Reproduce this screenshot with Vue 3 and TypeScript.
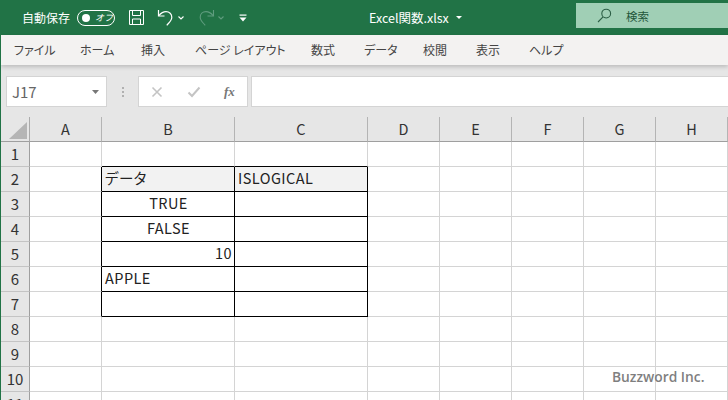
<script setup lang="ts">
interface Cell { text?: string; align?: string; head?: boolean }

const tabs: string[] = ['ファイル', 'ホーム', '挿入', 'ページ レイアウト', '数式', 'データ', '校閲', '表示', 'ヘルプ']
const cols: string[] = ['A', 'B', 'C', 'D', 'E', 'F', 'G', 'H']
const rows: number[] = [1, 2, 3, 4, 5, 6, 7, 8, 9, 10, 11]

const content: Record<string, Cell> = {
  B2: { text: 'データ', head: true },
  C2: { text: 'ISLOGICAL', head: true },
  B3: { text: 'TRUE', align: 'center' },
  B4: { text: 'FALSE', align: 'center' },
  B5: { text: '10', align: 'right' },
  B6: { text: 'APPLE' },
}

function cellClass(c: string, r: number): (string | Record<string, boolean>)[] {
  const inTable = (c === 'B' || c === 'C') && r >= 2 && r <= 7
  const cell = content[c + r]
  return [
    'cell',
    cell?.align ? 'al-' + cell.align : '',
    {
      head: !!cell?.head,
      'black-r': inTable || (c === 'A' && r >= 2 && r <= 7),
      'black-b': inTable || ((c === 'B' || c === 'C') && r === 1),
    },
  ]
}
</script>

<template>
  <div class="app">
    <header class="titlebar">
      <span class="autosave">自動保存</span>
      <span class="toggle"><i class="knob"></i><em>オフ</em></span>
      <svg class="ic save" width="17" height="17" viewBox="0 0 17 17" fill="none" stroke="#fff" stroke-width="1">
        <path d="M1.5 1.5h14v14h-14z" />
        <path d="M4.5 1.5v5h8v-5" />
        <path d="M4.5 15.5v-5.5h8v5.5" />
      </svg>
      <svg class="ic undo" width="17" height="18" viewBox="0 0 17 18" fill="none" stroke="#fff" stroke-width="1.2">
        <path d="M1.5 1v6h6" />
        <path d="M1.8 6.6C4 4 6 2.6 9 2.6c3.4 0 5.8 2.4 5.8 5.6 0 3.4-3 5.6-5 8.2" />
      </svg>
      <svg class="ic chev" width="6" height="4" viewBox="0 0 6 4" fill="none" stroke="#fff" stroke-width="1.1"><path d="M.5.5 3 3 5.5.5" /></svg>
      <svg class="ic redo" width="17" height="18" viewBox="0 0 17 18" fill="none" stroke="#5f9c7e" stroke-width="1.1">
        <path d="M15.5 1v6h-6" />
        <path d="M15.2 6.6C13 4 11 2.6 8 2.6 4.6 2.6 2.2 5 2.2 8.2c0 3.4 3 5.6 5 8.2" />
      </svg>
      <svg class="ic chev2" width="6" height="4" viewBox="0 0 6 4" fill="none" stroke="#5f9c7e" stroke-width="1.1"><path d="M.5.5 3 3 5.5.5" /></svg>
      <svg class="ic qat" width="8" height="8" viewBox="0 0 8 8" fill="#fff">
        <rect x="0.5" y="0.5" width="7" height="1.2" />
        <path d="M.5 3.6h7L4 7.4z" />
      </svg>
      <span class="filename">Excel関数.xlsx</span>
      <svg class="ic caret" width="6" height="3" viewBox="0 0 6 3" fill="#fff"><path d="M0 0h6L3 3z" /></svg>
      <div class="search">
        <svg width="15" height="15" viewBox="0 0 15 15" fill="none" stroke="#2b5e44" stroke-width="1.1">
          <circle cx="9.2" cy="5.6" r="4.4" />
          <path d="M6 8.8 1 14" />
        </svg>
        <span>検索</span>
      </div>
    </header>

    <nav class="tabs">
      <span v-for="t in tabs" :key="t" class="tab">{{ t }}</span>
    </nav>

    <div class="formula">
      <div class="namebox">
        <span>J17</span>
        <svg width="7" height="4" viewBox="0 0 7 4" fill="#777"><path d="M0 0h7L3.5 4z" /></svg>
      </div>
      <div class="dots"><i></i><i></i><i></i></div>
      <div class="fbtns">
        <svg width="12" height="12" viewBox="0 0 12 12" fill="none" stroke="#c4c4c4" stroke-width="1.6"><path d="M1.5 1.5l9 9M10.5 1.5l-9 9" /></svg>
        <svg width="14" height="12" viewBox="0 0 14 12" fill="none" stroke="#c4c4c4" stroke-width="2"><path d="M1.5 6.5 5 10l7.5-8.5" /></svg>
        <span class="fx">fx</span>
      </div>
      <div class="finput"></div>
    </div>

    <div class="sheet">
      <div class="corner">
        <svg width="18" height="17" viewBox="0 0 18 17"><path d="M18 0v17H0z" fill="#b5b5b5" /></svg>
      </div>
      <div v-for="c in cols" :key="c" class="colh">{{ c }}</div>
      <template v-for="r in rows" :key="r">
        <div class="rowh">{{ r }}</div>
        <div v-for="c in cols" :key="c + r" :class="cellClass(c, r)">{{ content[c + r]?.text }}</div>
      </template>
    </div>

    <div class="mark">Buzzword Inc.</div>
  </div>
</template>

<style>
html, body { margin: 0; padding: 0; background: #fff; }
</style>

<style scoped>
.app {
  position: relative;
  width: 728px;
  height: 400px;
  overflow: hidden;
  box-sizing: border-box;
  border-left: 1px solid #217346;
  font-family: "Noto Sans CJK JP", "Noto Sans", sans-serif;
  color: #333;
}
.titlebar {
  margin-left: -1px;
  height: 35px;
  background: #217346;
  display: flex;
  align-items: center;
  color: #fff;
  position: relative;
}
.autosave { margin-left: 22px; font-size: 12px; width: 48px; white-space: nowrap; }
.toggle {
  margin-left: 7px;
  width: 38px;
  height: 16px;
  box-sizing: border-box;
  border: 1px solid #fff;
  border-radius: 8px;
  display: flex;
  align-items: center;
  padding-left: 4px;
}
.knob { width: 8px; height: 8px; border-radius: 50%; background: #fff; }
.toggle em { font-size: 9px; margin-left: 5px; line-height: 1; white-space: nowrap; }
.ic { flex: none; }
.save { margin-left: 13px; }
.undo { margin-left: 12px; }
.chev { margin-left: 4px; }
.redo { margin-left: 14px; }
.chev2 { margin-left: 3px; }
.qat { margin-left: 15px; }
.filename { margin-left: 122px; font-size: 12.5px; width: 81px; white-space: nowrap; }
.caret { margin-left: 6px; }
.search {
  margin-left: auto;
  width: 152px;
  height: 25px;
  margin-bottom: 5px;
  background: #a0cfb5;
  display: flex;
  align-items: center;
  padding-left: 21px;
  box-sizing: border-box;
  color: #24573c;
  font-size: 11.5px;
}
.search span { margin-left: 14px; padding-top: 2px; }
.tabs {
  height: 30px;
  background: #f3f2f1;
  display: grid;
  grid-template-columns: 66px 61px 54px 116px 53px 59px 53px 53px auto;
  align-items: center;
  padding: 0 0 2px 13px;
  box-sizing: border-box;
  font-size: 12px;
  color: #444;
  font-feature-settings: "palt";
  box-shadow: 0 2px 4px rgba(0, 0, 0, 0.18);
  position: relative;
}
.tab { white-space: nowrap; }
.formula {
  height: 52px;
  background: #e6e6e6;
  display: flex;
  align-items: flex-start;
  padding: 11px 0 0 5px;
  box-sizing: border-box;
}
.namebox {
  width: 101px;
  height: 31px;
  box-sizing: border-box;
  background: #fff;
  border: 1px solid #d4d4d4;
  display: flex;
  align-items: center;
  justify-content: space-between;
  padding: 0 7px 0 5px;
  font-size: 15px;
  color: #666;
}
.dots {
  width: 31px;
  height: 31px;
  display: flex;
  flex-direction: column;
  align-items: center;
  justify-content: center;
  gap: 2px;
}
.dots i { width: 2px; height: 2px; background: #b0b0b0; }
.fbtns {
  width: 110px;
  height: 31px;
  box-sizing: border-box;
  background: #fff;
  border: 1px solid #d4d4d4;
  display: flex;
  align-items: center;
  padding-left: 12px;
  gap: 24px;
}
.fx {
  font-family: "Liberation Serif", serif;
  font-style: italic;
  font-weight: 700;
  font-size: 13px;
  color: #777;
  margin-left: -1px;
}
.finput {
  margin-left: 3px;
  flex: 1;
  height: 31px;
  box-sizing: border-box;
  background: #fff;
  border: 1px solid #d4d4d4;
  border-right: 0;
}
.sheet {
  display: grid;
  grid-template-columns: 29px 72px 133px 133px repeat(5, 72px);
  grid-auto-rows: 25px;
  height: 283px;
  overflow: hidden;
}
.corner, .colh, .rowh { background: #e6e6e6; box-sizing: border-box; }
.corner {
  border-right: 1px solid #ababab;
  border-bottom: 1px solid #9f9f9f;
  display: flex;
  align-items: flex-start;
  padding: 5px 0 0 8px;
}
.colh {
  border-right: 1px solid #b4b4b4;
  border-bottom: 1px solid #9f9f9f;
  display: flex;
  align-items: center;
  justify-content: center;
  padding-bottom: 2px;
  font-size: 14.5px;
  color: #333;
}
.rowh {
  border-right: 1px solid #9f9f9f;
  border-bottom: 1px solid #c4c4c4;
  display: flex;
  align-items: center;
  justify-content: center;
  padding-bottom: 2px;
  font-size: 15px;
  color: #333;
}
.cell {
  box-sizing: border-box;
  border-right: 1px solid #d4d4d4;
  border-bottom: 1px solid #d4d4d4;
  display: flex;
  align-items: center;
  padding: 0 2px 2px 3px;
  font-size: 14.5px;
  letter-spacing: 0.45px;
  line-height: 22px;
  color: #222;
  white-space: nowrap;
  font-feature-settings: "palt";
}
.al-center { justify-content: center; }
.al-right { justify-content: flex-end; }
.head { background: #f2f2f2; }
.black-r { border-right-color: #000; }
.black-b { border-bottom-color: #000; }
.mark {
  position: absolute;
  left: 611px;
  top: 367px;
  font-family: "Open Sans", sans-serif;
  font-size: 13.8px;
  font-weight: 600;
  color: #7f7f7f;
  white-space: nowrap;
}
</style>
